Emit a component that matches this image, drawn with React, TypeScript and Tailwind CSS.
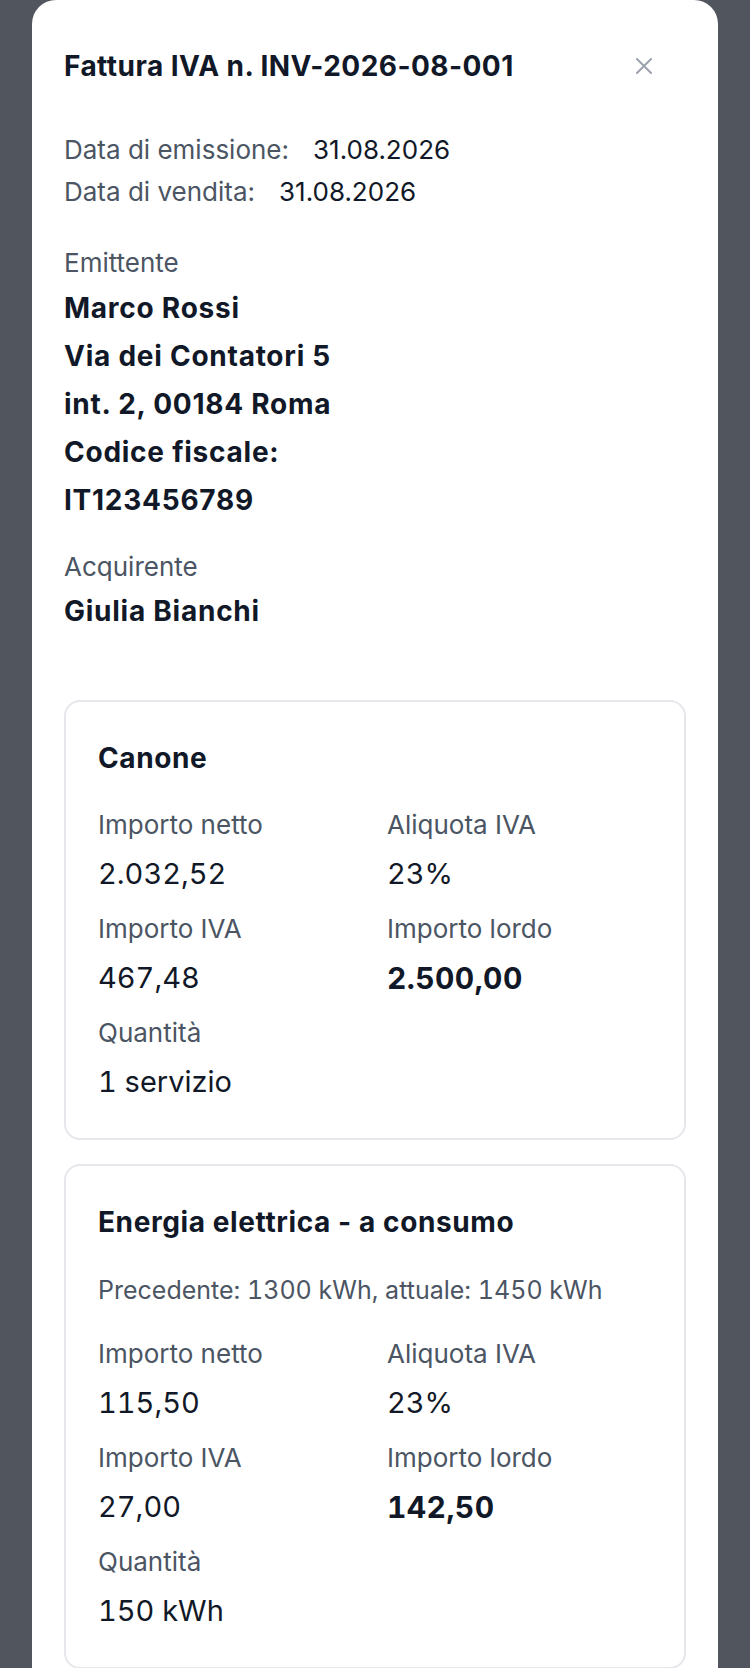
import React from "react";

type Cell = { label: string; value: string; bold?: boolean };

function Field({ label, value, bold }: Cell) {
  return (
    <div className="flex flex-col">
      <div className="text-[26px] leading-[40px] text-[#4b5563]">{label}</div>
      <div
        className={
          bold
            ? "mt-[9px] text-[30px] leading-[40px] font-bold tracking-[0.4px] tabular-nums text-[#111827]"
            : "mt-[9px] text-[29px] leading-[40px] tabular-nums text-[#111827]"
        }
      >
        {value}
      </div>
    </div>
  );
}

function Card({ title, note, cells }: { title: string; note?: string; cells: Cell[] }) {
  return (
    <div className="rounded-[16px] border-2 border-[#e5e7eb] px-8 pt-8 pb-[36px]">
      <div className="text-[28px] leading-[48px] font-bold tracking-[0.6px] text-[#111827]">{title}</div>
      {note ? (
        <div className="mt-[24px] text-[25px] leading-[40px] tabular-nums text-[#4b5563]">{note}</div>
      ) : null}
      <div className={note ? "mt-[24px] grid grid-cols-2 gap-x-6 gap-y-[15px]" : "mt-[23px] grid grid-cols-2 gap-x-6 gap-y-[15px]"}>
        {cells.map((c) => (
          <Field key={c.label} {...c} />
        ))}
      </div>
    </div>
  );
}

export default function App() {
  return (
    <div className="h-[1668px] overflow-hidden bg-[#51555e] px-8 font-['Inter',sans-serif]">
      <div className="min-h-full rounded-t-[24px] bg-white px-8 pt-12 pb-10">
        <div className="flex items-center justify-between">
          <h1 className="text-[28px] leading-[36px] font-bold tracking-[0.45px] text-[#111827]">
            Fattura IVA n. INV-2026-08-001
          </h1>
          <button className="mr-[34px] flex h-4 w-4 items-center justify-center" aria-label="Chiudi">
            <svg width="16" height="16" viewBox="0 0 16 16" fill="none">
              <path
                d="M1 1L15 15M15 1L1 15"
                stroke="#9ca3af"
                strokeWidth="2"
                strokeLinecap="round"
              />
            </svg>
          </button>
        </div>

        <div className="mt-[45px] text-[26px] leading-[42px]">
          <div>
            <span className="text-[#4b5563]">Data di emissione:</span>
            <span className="ml-6 text-[#111827]">31.08.2026</span>
          </div>
          <div>
            <span className="text-[#4b5563]">Data di vendita:</span>
            <span className="ml-6 text-[#111827]">31.08.2026</span>
          </div>
        </div>

        <div className="mt-[30px] text-[26px] leading-[40px] text-[#4b5563]">Emittente</div>
        <div className="mt-px text-[28px] leading-[48px] font-bold tracking-[0.75px] text-[#111827]">
          <div>Marco Rossi</div>
          <div>Via dei Contatori 5</div>
          <div>int. 2, 00184 Roma</div>
          <div>Codice fiscale:</div>
          <div>IT123456789</div>
        </div>

        <div className="mt-[23px] text-[26px] leading-[40px] text-[#4b5563]">Acquirente</div>
        <div className="text-[28px] leading-[48px] font-bold tracking-[0.75px] text-[#111827]">Giulia Bianchi</div>

        <div className="mt-[65px] flex flex-col gap-6">
          <Card
            title="Canone"
            cells={[
              { label: "Importo netto", value: "2.032,52" },
              { label: "Aliquota IVA", value: "23%" },
              { label: "Importo IVA", value: "467,48" },
              { label: "Importo lordo", value: "2.500,00", bold: true },
              { label: "Quantità", value: "1 servizio" },
            ]}
          />
          <Card
            title="Energia elettrica - a consumo"
            note="Precedente: 1300 kWh, attuale: 1450 kWh"
            cells={[
              { label: "Importo netto", value: "115,50" },
              { label: "Aliquota IVA", value: "23%" },
              { label: "Importo IVA", value: "27,00" },
              { label: "Importo lordo", value: "142,50", bold: true },
              { label: "Quantità", value: "150 kWh" },
            ]}
          />
        </div>
      </div>
    </div>
  );
}
